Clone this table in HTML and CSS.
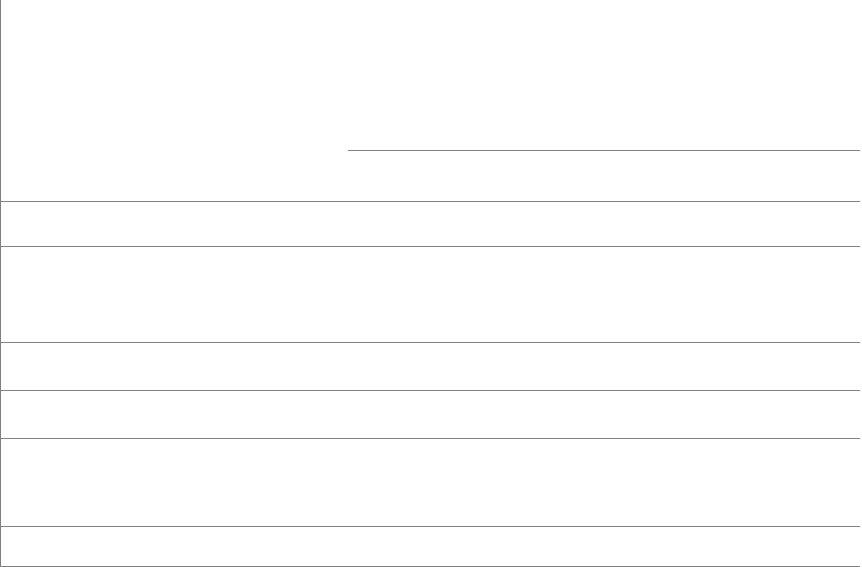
FILE: index.html
```
<!DOCTYPE html>
<html lang="en">
<head>
    <meta charset="UTF-8">
    <meta name="viewport" content="width=device-width, initial-scale=1.0">
    <title>Sheet</title>
    <link rel="stylesheet" href="styles.css">
</head>
<body>
    <div class="sheet">
        <div class="sheet-head">
            <div class="head-rule"></div>
        </div>
        <div class="sheet-row row-a"></div>
        <div class="sheet-row row-b"></div>
        <div class="sheet-row row-c"></div>
        <div class="sheet-row row-c"></div>
        <div class="sheet-row row-d"></div>
        <div class="sheet-row row-e"></div>
    </div>
</body>
</html>
```

FILE: styles.css
```
body {
    margin: 0;
    background-color: #fff;
    font-family: "Liberation Sans", Arial, sans-serif;
}
.sheet {
    width: 860px;
    border-left: 1px solid #808080;
    box-sizing: border-box;
}
.sheet-head {
    height: 201px;
    padding-top: 150px;
    box-sizing: border-box;
}
.head-rule {
    margin-left: 347px;
    border-top: 1px solid #808080;
}
.sheet-row {
    border-top: 1px solid #808080;
}
.row-a {
    height: 44px;
}
.row-b {
    height: 95px;
}
.row-c {
    height: 47px;
}
.row-d {
    height: 87px;
}
.row-e {
    height: 39px;
    border-bottom: 1px solid #808080;
}
```
